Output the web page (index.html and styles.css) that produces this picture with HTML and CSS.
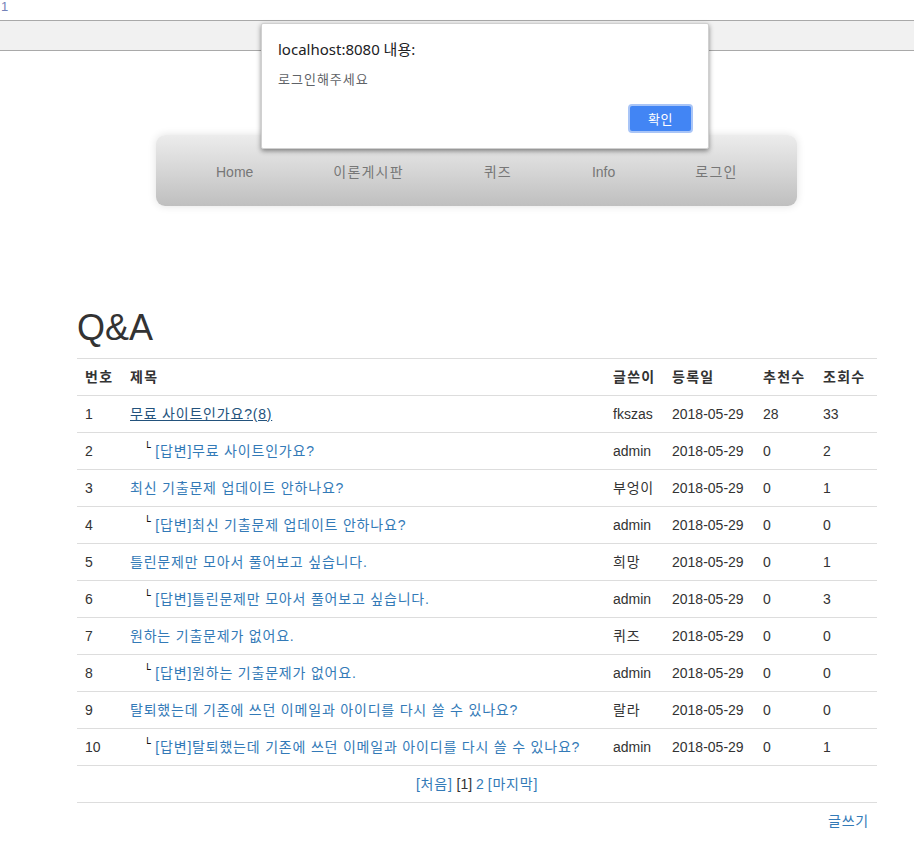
FILE: index.html
```html
<!DOCTYPE html>
<html lang="ko">
<head>
<meta charset="utf-8">
<title>Q&amp;A</title>
<link rel="stylesheet" href="styles.css">
</head>
<body>
<div class="pageno">1</div>
<div class="framebar"></div>

<nav class="topnav">
  <ul class="menu">
    <li><a href="#">Home</a></li>
    <li><a href="#" class="ko">이론게시판</a></li>
    <li><a href="#" class="ko">퀴즈</a></li>
    <li><a href="#">Info</a></li>
    <li><a href="#" class="ko">로그인</a></li>
  </ul>
</nav>

<main class="board">
  <h1 class="title">Q&amp;A</h1>
  <table class="list">
    <colgroup>
      <col class="c-no"><col class="c-subject"><col class="c-writer"><col class="c-date"><col class="c-rec"><col class="c-hit">
    </colgroup>
    <thead>
      <tr><th>번호</th><th>제목</th><th>글쓴이</th><th>등록일</th><th>추천수</th><th>조회수</th></tr>
    </thead>
    <tbody>
      <tr><td>1</td><td class="ko"><a href="#" class="visited">무료 사이트인가요?(8)</a></td><td>fkszas</td><td>2018-05-29</td><td>28</td><td>33</td></tr>
      <tr><td>2</td><td class="ko reply"><span class="branch">└</span> <a href="#">[답변]무료 사이트인가요?</a></td><td>admin</td><td>2018-05-29</td><td>0</td><td>2</td></tr>
      <tr><td>3</td><td class="ko"><a href="#">최신 기출문제 업데이트 안하나요?</a></td><td class="ko">부엉이</td><td>2018-05-29</td><td>0</td><td>1</td></tr>
      <tr><td>4</td><td class="ko reply"><span class="branch">└</span> <a href="#">[답변]최신 기출문제 업데이트 안하나요?</a></td><td>admin</td><td>2018-05-29</td><td>0</td><td>0</td></tr>
      <tr><td>5</td><td class="ko"><a href="#">틀린문제만 모아서 풀어보고 싶습니다.</a></td><td class="ko">희망</td><td>2018-05-29</td><td>0</td><td>1</td></tr>
      <tr><td>6</td><td class="ko reply"><span class="branch">└</span> <a href="#">[답변]틀린문제만 모아서 풀어보고 싶습니다.</a></td><td>admin</td><td>2018-05-29</td><td>0</td><td>3</td></tr>
      <tr><td>7</td><td class="ko"><a href="#">원하는 기출문제가 없어요.</a></td><td class="ko">퀴즈</td><td>2018-05-29</td><td>0</td><td>0</td></tr>
      <tr><td>8</td><td class="ko reply"><span class="branch">└</span> <a href="#">[답변]원하는 기출문제가 없어요.</a></td><td>admin</td><td>2018-05-29</td><td>0</td><td>0</td></tr>
      <tr><td>9</td><td class="ko"><a href="#">탈퇴했는데 기존에 쓰던 이메일과 아이디를 다시 쓸 수 있나요?</a></td><td class="ko">랄라</td><td>2018-05-29</td><td>0</td><td>0</td></tr>
      <tr><td>10</td><td class="ko reply"><span class="branch">└</span> <a href="#">[답변]탈퇴했는데 기존에 쓰던 이메일과 아이디를 다시 쓸 수 있나요?</a></td><td>admin</td><td>2018-05-29</td><td>0</td><td>1</td></tr>
      <tr class="pager"><td colspan="6"><a href="#" class="ko">[처음]</a> <span class="current">[1]</span> <a href="#">2</a> <a href="#" class="ko">[마지막]</a></td></tr>
      <tr class="actions"><td colspan="6" class="ko"><a href="#">글쓰기</a></td></tr>
    </tbody>
  </table>
</main>

<div class="alert" role="alertdialog">
  <div class="alert-title">localhost:8080 내용:</div>
  <div class="alert-msg">로그인해주세요</div>
  <div class="alert-actions"><button class="alert-btn" type="button">확인</button></div>
</div>
</body>
</html>
```

FILE: styles.css
```css
html, body {
  margin: 0;
  padding: 0;
  background: #fff;
}

body {
  font-family: "Liberation Sans", "Noto Sans CJK KR", sans-serif;
  font-size: 14px;
  line-height: 20px;
  color: #333;
}

a {
  color: #337ab7;
  text-decoration: none;
}

.ko {
  letter-spacing: 0.8px;
}

.pageno {
  height: 20px;
  padding-left: 1px;
  font-size: 13px;
  line-height: 13px;
  color: #7482b8;
}

.framebar {
  height: 29px;
  background: #f1f1f1;
  border-top: 1px solid #a9a9a9;
  border-bottom: 1px solid #a9a9a9;
}

.topnav {
  width: 641px;
  height: 71px;
  margin: 84px 0 0 156px;
  border-radius: 9px;
  background: linear-gradient(to bottom, #ececec 0%, #d6d6d6 50%, #bfbfbf 100%);
  box-shadow: 0 0 8px rgba(0, 0, 0, 0.12);
}

.menu {
  display: flex;
  align-items: center;
  height: 100%;
  margin: 0;
  padding: 3px 0 0 20px;
  list-style: none;
  box-sizing: border-box;
}

.menu li {
  padding: 0 40px;
}

.menu a {
  color: #777;
  font-size: 14px;
}

.menu a.ko {
  letter-spacing: 1.2px;
}

.board {
  width: 800px;
  margin-left: 77px;
  padding-top: 82px;
}

.title {
  margin: 20px 0 10px;
  font-size: 36px;
  font-weight: normal;
  line-height: 39.6px;
  color: #333;
}

.list {
  width: 800px;
  border-collapse: collapse;
  table-layout: fixed;
}

.c-no { width: 45px; }
.c-subject { width: 483px; }
.c-writer { width: 59px; }
.c-date { width: 91px; }
.c-rec { width: 60px; }
.c-hit { width: 62px; }

.list th,
.list td {
  padding: 8px;
  text-align: left;
  vertical-align: top;
  border-top: 1px solid #ddd;
  white-space: nowrap;
}

.list th {
  font-weight: bold;
  letter-spacing: 1.3px;
  border-bottom: 1px solid #ddd;
}

.list a.visited {
  color: #23527c;
  text-decoration: underline;
}

.reply {
  padding-left: 22px !important;
}

.branch {
  display: inline-block;
  font-family: "DejaVu Sans", sans-serif;
  font-size: 11px;
  line-height: 10px;
  letter-spacing: 0;
  color: #111;
  vertical-align: 5px;
}

.pager td {
  text-align: center;
  border-bottom: 1px solid #ddd;
}

.current {
  color: #333;
}

.actions td {
  text-align: right;
  border-top: 1px solid #ddd;
}

.alert {
  position: absolute;
  left: 261px;
  top: 23px;
  width: 448px;
  height: 126px;
  box-sizing: border-box;
  padding: 15px 15px 0 16px;
  background: #fff;
  border: 1px solid #d0d0d0;
  border-radius: 2px;
  box-shadow: 0 2px 5px rgba(0, 0, 0, 0.45);
  font-family: "Noto Sans", "Noto Sans CJK KR", sans-serif;
}

.alert-title {
  font-size: 15px;
  line-height: 20px;
  color: #202124;
}

.alert-msg {
  margin-top: 11px;
  font-size: 13px;
  line-height: 18px;
  letter-spacing: 1px;
  color: #5f6368;
}

.alert-actions {
  display: flex;
  justify-content: flex-end;
  margin-top: 16px;
}

.alert-btn {
  width: 65px;
  height: 29px;
  box-sizing: border-box;
  background: #4285f4;
  border: 2px solid #a9c5f7;
  border-radius: 4px;
  color: #fff;
  font-family: "Noto Sans CJK KR", sans-serif;
  font-size: 13px;
  line-height: 20px;
  letter-spacing: 0.5px;
  padding: 0;
}
```
